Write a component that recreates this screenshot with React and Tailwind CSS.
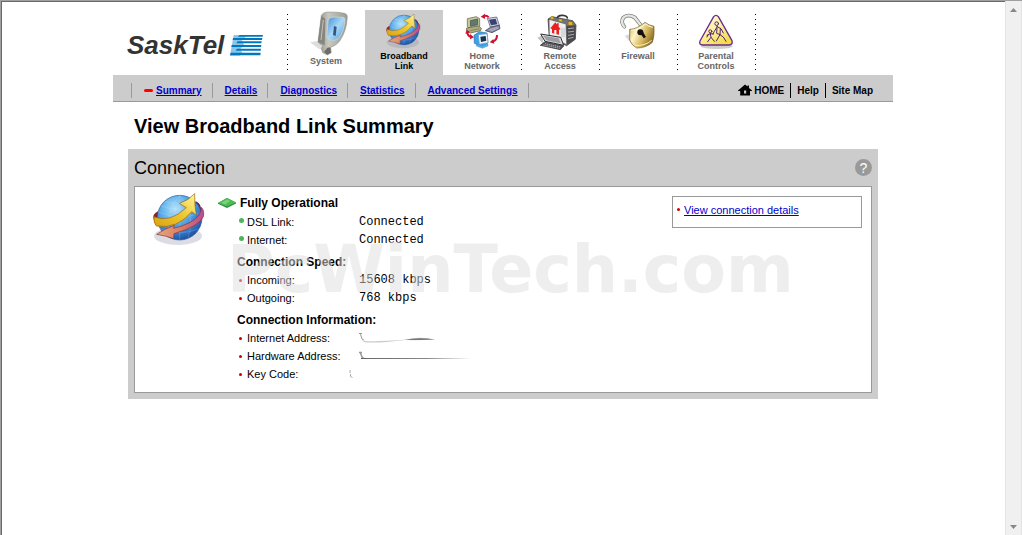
import React from "react";

/* ---------- icons ---------- */

function GlobeShapes({ id }) {
  return (
    <g>
      <defs>
        <radialGradient id={id + "s"} cx="0.4" cy="0.3" r="0.75">
          <stop offset="0" stopColor="#b5e2fb" />
          <stop offset="0.4" stopColor="#62b2ec" />
          <stop offset="0.8" stopColor="#2b6fc4" />
          <stop offset="1" stopColor="#1c4490" />
        </radialGradient>
        <linearGradient id={id + "y"} x1="0" y1="1" x2="1" y2="0">
          <stop offset="0" stopColor="#dda30e" />
          <stop offset="0.5" stopColor="#ecc62f" />
          <stop offset="1" stopColor="#fff69a" />
        </linearGradient>
        <linearGradient id={id + "r"} x1="0" y1="0" x2="1" y2="0">
          <stop offset="0" stopColor="#e8a878" />
          <stop offset="0.55" stopColor="#d87a62" />
          <stop offset="1" stopColor="#b64d94" />
        </linearGradient>
      </defs>
      <ellipse cx="144" cy="152" rx="72" ry="27" fill="#8a8aa5" opacity="0.3" />
      <path d="M70 98 Q68 86 84 78 L92 96 L74 112 Z" fill="#8c1f2c" />
      <path d="M198 48 Q216 56 214 82 L196 76 Z" fill="#6a1d55" />
      <circle cx="149" cy="97" r="67" fill={`url(#${id}s)`} stroke="#2c5798" strokeWidth="2" />
      <g fill="none" stroke="#d3effc" strokeWidth="1.5" opacity="0.4">
        <path d="M94 62 Q149 82 203 62" />
        <path d="M104 48 Q149 60 194 48" />
        <path d="M84 80 Q149 108 215 82" />
        <path d="M90 130 Q149 154 208 130" />
        <path d="M149 30 V164" />
        <path d="M149 30 Q98 82 124 158" />
        <path d="M149 30 Q200 82 174 158" />
      </g>
      <path
        d="M214 66 Q224 76 220 94 Q208 123 132 145 L131 160 Q106 151 80 147 Q104 130 133 120 L131 129 Q190 114 206 90 Q215 78 214 66 Z"
        fill={`url(#${id}r)`}
        stroke="#842d3c"
        strokeWidth="2"
      />
      <path
        d="M72 94 Q118 115 169 67 L148 54 Q176 45 194 25 Q193 58 199 89 L185 79 Q143 132 79 122 Q70 111 72 94 Z"
        fill={`url(#${id}y)`}
        stroke="#98610a"
        strokeWidth="2"
      />
    </g>
  );
}

function SystemIcon() {
  return (
    <svg viewBox="531 30 234 138" className="block h-[46px] w-[78px]" aria-hidden="true">
      <defs>
        <linearGradient id="sysScreen" x1="0" y1="0" x2="1" y2="1">
          <stop offset="0" stopColor="#3f8fd8" />
          <stop offset="0.5" stopColor="#a9d8f6" />
          <stop offset="1" stopColor="#4a9ae0" />
        </linearGradient>
        <linearGradient id="sysBody" x1="0" y1="0" x2="1" y2="0">
          <stop offset="0" stopColor="#8a8b84" />
          <stop offset="0.35" stopColor="#c8c8bf" />
          <stop offset="1" stopColor="#9b9c94" />
        </linearGradient>
      </defs>
      <path d="M600 127 L628 122 L646 150 L626 146 Z" fill="#d5d5d5" opacity="0.8" />
      <path
        d="M634 46 Q639 37 650 36 Q684 35 704 40 Q713 43 712 52 Q710 92 690 122 Q678 138 662 142 L664 158 L652 165 L638 158 L634 146 L638 136 Q628 132 624 126 Z"
        fill="url(#sysBody)"
        stroke="#8d8d85"
        strokeWidth="1.5"
      />
      <path d="M634 48 L646 56 L644 136 L624 124 Z" fill="#85867f" />
      <path d="M640 60 L633 120" stroke="#c3c3ba" strokeWidth="3" />
      <path
        d="M655 60 Q659 51 671 51 L699 52 Q706 53 705 61 Q702 94 686 115 Q675 124 660 120 Q650 116 650 108 Z"
        fill="url(#sysScreen)"
        stroke="#d9dbd5"
        strokeWidth="2"
      />
      <path d="M672 78 L680 81 L677 108 L669 105 Z" fill="#35577e" />
      <path d="M652 143 L661 142 L663 158 L652 164 L642 156 Z" fill="#6c6d68" />
    </svg>
  );
}

function BroadbandIcon() {
  return (
    <svg viewBox="15 30 234 123" className="block h-[41px] w-[78px]" aria-hidden="true">
      <g transform="translate(32.6 25.3) scale(0.667)">
        <GlobeShapes id="gsm" />
      </g>
    </svg>
  );
}

function HomeNetworkIcon() {
  return (
    <svg viewBox="249 30 234 123" className="block h-[41px] w-[78px]" aria-hidden="true">
      {/* beige desktop computer */}
      <path d="M322 56 L349 50 L359 56 L359 79 L332 86 L322 80 Z" fill="#c9c79b" stroke="#5b5a3a" strokeWidth="2" />
      <path d="M331 62 L353 57 L353 74 L332 79 Z" fill="#5c7b77" stroke="#3f4b36" strokeWidth="2" />
      <path d="M320 84 L356 78 L364 85 L362 92 L332 99 L320 91 Z" fill="#b0ae80" stroke="#55543a" strokeWidth="2" />
      <path d="M331 92 L358 86" stroke="#6d6c48" strokeWidth="2" />
      {/* laptop */}
      <path d="M382 55 L410 51 L418 76 L391 81 Z" fill="#d3d6ea" stroke="#454860" strokeWidth="2" />
      <path d="M387 59 L407 56 L412 73 L393 76 Z" fill="#38436f" />
      <path d="M391 82 L418 76 L420 86 L396 98 L376 92 Z" fill="#85889f" stroke="#33354a" strokeWidth="2" />
      <path d="M386 90 L413 81 M391 93 L416 84" stroke="#e3e4ef" strokeWidth="1.5" />
      {/* blue desktop computer */}
      <path d="M342 106 L358 95 L381 99 L384 128 L371 139 L343 130 Z" fill="#3da1e6" stroke="#1c70b8" strokeWidth="2" />
      <path d="M355 104 L381 101 L384 128 L358 133 Z" fill="#eef5fa" stroke="#5b9fd8" strokeWidth="2" />
      <path d="M361 110 L377 108 L379 122 L363 126 Z" fill="#1b3150" />
      <path d="M349 132 L366 138 L384 131 L384 138 L367 145 L349 138 Z" fill="#58aee8" stroke="#2b78b5" strokeWidth="1" />
      {/* circulating arrows */}
      <g fill="none" stroke="#d0102e" strokeWidth="6">
        <path d="M386 52 Q380 45 371 49" />
        <path d="M322 94 Q322 110 334 111" />
        <path d="M411 105 Q411 121 398 125" />
      </g>
      <g fill="#d0102e">
        <path d="M362 50 L375 41 L375 57 Z" />
        <path d="M316 102 L320 89 L331 97 Z" />
        <path d="M389 127 L400 117 L403 131 Z" />
        <path d="M330 102 L342 112 L330 118 Z" />
      </g>
    </svg>
  );
}

function RemoteAccessIcon() {
  return (
    <svg viewBox="3 30 234 123" className="block h-[41px] w-[78px]" aria-hidden="true">
      <path d="M52 113 L66 106 L72 134 Z" fill="#c6c6c6" />
      <path d="M111 56 Q113 45 128 46 Q143 47 142 56" fill="none" stroke="#37373b" strokeWidth="5" />
      <path d="M84 57 L96 50 L158 62 L168 75 L166 118 L140 137 L88 112 Z" fill="#727277" stroke="#28282b" strokeWidth="2" />
      <path d="M138 78 L166 76 L165 118 L140 135 Z" fill="#49494e" />
      <path d="M144 86 L162 84 M144 96 L162 94 M144 106 L162 103 M144 116 L160 112" stroke="#a9a9af" strokeWidth="3" />
      <path d="M87 58 L138 72 L140 134 L88 110 Z" fill="#f0f0f1" stroke="#54545a" strokeWidth="2" />
      <path d="M91 85 L106 67 L122 88 L117 89 L117 104 L96 99 L96 87 Z" fill="#ea2121" />
      <path d="M103 90 h6 v12 l-6 -1 Z" fill="#fff" />
      <path d="M111 70 h5 v9 h-5 Z" fill="#ea2121" />
      <path d="M126 82 V112 M132 84 V112" stroke="#c2c2c7" strokeWidth="3" />
      <path d="M62 102 L122 112 L131 136 L75 124 Z" fill="#d9d9dc" stroke="#303034" strokeWidth="3" />
      <path d="M70 107 L116 115 L122 130 L79 121 Z" fill="#9d9da3" />
      <path d="M74 126 L131 138 L121 149 L61 136 Z" fill="#535359" stroke="#27272a" strokeWidth="2" />
      <path d="M75 131 L123 141 M70 135 L119 145" stroke="#dedee2" strokeWidth="2" strokeDasharray="4 2" />
      <g fill="#e6bb29" stroke="#755c0c" strokeWidth="1">
        <path d="M91 51 L99 49 L102 57 L93 59 Z" />
        <path d="M116 57 L126 58 L127 66 L116 64 Z" />
        <path d="M145 65 L157 66 L158 76 L145 75 Z" />
      </g>
    </svg>
  );
}

function FirewallIcon() {
  return (
    <svg viewBox="237 30 234 123" className="block h-[41px] w-[78px]" aria-hidden="true">
      <defs>
        <linearGradient id="lockBody" x1="0" y1="0" x2="1" y2="0.5">
          <stop offset="0" stopColor="#c8a74b" />
          <stop offset="0.35" stopColor="#fff6ca" />
          <stop offset="0.7" stopColor="#d5b75c" />
          <stop offset="1" stopColor="#91712a" />
        </linearGradient>
      </defs>
      <path d="M314 107 L332 102 L348 141 L330 126 Z" fill="#cfcfcf" opacity="0.8" />
      <path d="M313 80 Q301 66 310 53 Q324 40 345 53 L364 78" fill="none" stroke="#5b5b58" strokeWidth="11" strokeLinecap="round" />
      <path d="M313 80 Q301 66 310 53 Q324 40 345 53 L364 78" fill="none" stroke="#e6e6e0" strokeWidth="8" strokeLinecap="round" />
      <path d="M316 80 Q306 67 313 56 Q325 45 342 57 L360 79" fill="none" stroke="#a2a29d" strokeWidth="2" />
      <path d="M329 88 Q350 88 375 67 Q386 76 402 79 Q404 108 397 127 Q379 144 350 144 Q334 135 329 120 Z" fill="url(#lockBody)" stroke="#755b20" strokeWidth="2" />
      <path d="M333 91 Q355 91 376 72 Q386 79 398 82" fill="none" stroke="#fff9dc" strokeWidth="3" />
      <circle cx="361" cy="97" r="9" fill="#111" />
      <path d="M360 99 L369 96 L378 111 L371 115 Z" fill="#111" />
      <path d="M343 136 Q375 139 395 121" fill="none" stroke="#fbefb7" strokeWidth="3" />
    </svg>
  );
}

function ParentalIcon() {
  return (
    <svg viewBox="471 30 234 123" className="block h-[41px] w-[78px]" aria-hidden="true">
      <defs>
        <linearGradient id="signFill" x1="0" y1="0" x2="0.6" y2="1">
          <stop offset="0" stopColor="#fffde6" />
          <stop offset="0.6" stopColor="#fbf09a" />
          <stop offset="1" stopColor="#f2dc4c" />
        </linearGradient>
      </defs>
      <ellipse cx="590" cy="139" rx="48" ry="8" fill="#cecece" />
      <path d="M581 50 Q588 42 595 50 L636 122 Q639 134 627 135 L548 135 Q536 134 540 123 Z" fill="url(#signFill)" stroke="#6b2a91" strokeWidth="4" strokeLinejoin="round" />
      <g fill="none" stroke="#542077" strokeWidth="3" strokeLinecap="round" strokeLinejoin="round">
        <circle cx="590" cy="71" r="5.5" />
        <path d="M590 79 L603 86 L610 99 M592 80 L583 94 L579 102 M601 86 L600 104 L589 123 M600 104 L610 111 L618 124 M591 84 L590 100 L600 104" />
        <circle cx="571" cy="94" r="4.5" />
        <path d="M571 101 L561 106 M571 101 L580 102 M571 101 L573 112 L563 125 M573 112 L583 124 M565 103 L561 111" />
      </g>
    </svg>
  );
}

function LogoStripes() {
  return (
    <svg viewBox="361 99 99 66" className="block h-[22px] w-[33px]" aria-hidden="true">
      <path fill="#8dc5e8" d="M372 102 H414 L396 120 L404 132 L392 144 L398 156 L390 164 H361 Z" />
      <g fill="#0078c0">
        <path d="M390 102 H460 L459 107 H384 Z" />
        <path d="M370 111 H458 L457 117 H369 Z" />
        <path d="M384 121 H456 L455 127 H380 Z" />
        <path d="M366 132 H455 L454 138 H365 Z" />
        <path d="M382 143 H454 L453 149 H378 Z" />
        <path d="M363 155 H453 L452 163 H361 Z" />
      </g>
    </svg>
  );
}

function HouseIcon() {
  return (
    <svg viewBox="0 0 14 12" className="block h-3 w-3.5" aria-hidden="true">
      <path fillRule="evenodd" d="M7 0.5 L9.5 2.6 V1.4 H11 V4 L14 6.6 V7 H12 V11.4 H2.2 V7 H0 V6.6 Z M6 6.5 V9.6 H8.2 V6.5 Z" fill="#000" />
    </svg>
  );
}

/* ---------- building blocks ---------- */

const sections = [
  { label: ["System"], Icon: SystemIcon, dotted: true },
  { label: ["Broadband", "Link"], Icon: BroadbandIcon, active: true },
  { label: ["Home", "Network"], Icon: HomeNetworkIcon },
  { label: ["Remote", "Access"], Icon: RemoteAccessIcon, dotted: true },
  { label: ["Firewall"], Icon: FirewallIcon, dotted: true },
  { label: ["Parental", "Controls"], Icon: ParentalIcon, dotted: true },
];

const pages = ["Summary", "Details", "Diagnostics", "Statistics", "Advanced Settings"];

function Dots({ side }) {
  return (
    <span
      className={
        "absolute top-1 bottom-1 w-px bg-[repeating-linear-gradient(to_bottom,#000_0_1px,transparent_1px_5px)] " +
        (side === "right" ? "-right-px" : "left-0")
      }
    />
  );
}

function Bullet({ green }) {
  return green ? (
    <span className="mb-1 size-[5px] rounded-full bg-[#4db457]" />
  ) : (
    <span className="size-[3px] rounded-full bg-[#cc0000]" />
  );
}

function Row({ label, green, children }) {
  return (
    <div className="flex h-[18px] items-center">
      <dt className="flex w-[122px] shrink-0 items-center">
        <span className="flex w-[10px] items-center pl-0.5">
          <Bullet green={green} />
        </span>
        {label}
      </dt>
      <dd className="font-['Liberation_Mono',monospace] text-xs">{children}</dd>
    </div>
  );
}

function GroupTitle({ children }) {
  return <h3 className="mt-1 flex h-[18px] items-center text-xs font-bold">{children}</h3>;
}

function Scrollbar() {
  return (
    <div className="flex w-[17px] shrink-0 flex-col justify-between border-x border-[#e3e3e3] bg-[#f0f0f0]">
      <button type="button" aria-label="Scroll up" className="flex h-[17px] items-center justify-center">
        <svg viewBox="0 0 7 4" className="h-1 w-[7px]">
          <path d="M3.5 0 L7 4 H0 Z" fill="#888" />
        </svg>
      </button>
      <button type="button" aria-label="Scroll down" className="flex h-[17px] items-center justify-center">
        <svg viewBox="0 0 7 4" className="h-1 w-[7px]">
          <path d="M0 0 H7 L3.5 4 Z" fill="#888" />
        </svg>
      </button>
    </div>
  );
}

/* ---------- page ---------- */

export default function App() {
  return (
    <div className="flex min-h-screen border-t border-l border-[#a0a0a0] bg-white font-['Liberation_Sans',Arial,sans-serif] text-black">
      <div className="min-w-0 flex-1 border-t border-l border-[#696969] pr-px">
        <div className="mx-auto max-w-[780px] pt-2">
          <header className="flex">
            <a href="#home" aria-label="SaskTel" className="flex min-w-0 flex-1 items-center gap-1.5 pt-1 pl-3.5">
              <span className="text-[26px] leading-8 font-bold text-[#333] italic">SaskTel</span>
              <LogoStripes />
            </a>
            <nav aria-label="Sections" className="flex pr-[138px]">
              {sections.map(({ label, Icon, active, dotted }, i) => (
                <a
                  key={label[0]}
                  href={"#" + label[0].toLowerCase()}
                  className={
                    "relative h-[65px] w-[78px] text-center text-[9px] leading-[10px] font-bold " +
                    (active ? "bg-[#cccccc] text-black" : "text-[#666666]")
                  }
                >
                  {dotted && <Dots />}
                  <Icon />
                  {label.map((word) => (
                    <span key={word} className="block">
                      {word}
                    </span>
                  ))}
                  {i === sections.length - 1 && <Dots side="right" />}
                </a>
              ))}
            </nav>
          </header>

          <div className="flex h-[27px] items-center justify-between border-b border-[#999999] bg-[#cccccc] pt-1 pr-5 pl-[18px] text-[10px] font-bold">
            <ul className="flex h-[15px] items-center">
              {pages.map((name, i) => (
                <li key={name} className="flex h-[15px] items-center gap-[3px] border-l border-[#999999] pr-2.5 pl-3">
                  {i === 0 && <span className="h-[3px] w-[9px] rounded-full bg-[#ff0000]" />}
                  <a href={"#" + name.toLowerCase().replace(" ", "-")} className="text-[#0000cc] underline">
                    {name}
                  </a>
                </li>
              ))}
              <li className="h-[15px] border-l border-[#999999]" />
            </ul>
            <div className="flex h-[15px] items-center">
              <a href="#top" className="flex items-center gap-0.5 pr-1.5">
                <HouseIcon />
                HOME
              </a>
              <a href="#help" className="flex h-[15px] items-center border-l border-black px-1.5">
                Help
              </a>
              <a href="#sitemap" className="flex h-[15px] items-center border-l border-black pl-1.5">
                Site Map
              </a>
            </div>
          </div>

          <main className="px-[15px]">
            <h1 className="flex h-[47px] items-center pl-1.5 text-xl font-bold">View Broadband Link Summary</h1>

            <section className="bg-[#cccccc] px-1.5 pb-1.5">
              <div className="flex h-[37px] items-center justify-between">
                <h2 className="text-lg">Connection</h2>
                <button
                  type="button"
                  aria-label="Help"
                  className="flex size-[17px] items-center justify-center rounded-full bg-[#999999] text-sm leading-none text-white"
                >
                  ?
                </button>
              </div>

              <div className="relative flex border border-[#999999] bg-white pt-1.5 pr-[9px] pb-[9px] text-[11px]">
                <div className="w-[83px] shrink-0 pl-[15px]">
                  <svg viewBox="60 23 168 168" className="block size-14" aria-hidden="true">
                    <GlobeShapes id="glg" />
                  </svg>
                </div>

                <div className="min-w-0 flex-1">
                  <h3 className="flex h-5 items-center gap-1 text-xs font-bold">
                    <svg viewBox="0 0 18 10" className="h-2.5 w-[18px]" aria-hidden="true">
                      <path d="M0 5 L9 0 L18 4.5 V5.5 L9 10 L0 5.8 Z" fill="#2e8b3a" />
                      <path d="M0 5 L9 0 L18 4.5 L9 8.5 Z" fill="#4fbb56" />
                      <path d="M3 4.8 L9 1.5 L12 3 L7 6.5 Z" fill="#78d47b" />
                    </svg>
                    Fully Operational
                  </h3>
                  <dl className="pl-[19px]">
                    <Row label="DSL Link:" green>
                      Connected
                    </Row>
                    <Row label="Internet:" green>
                      Connected
                    </Row>
                  </dl>
                  <div className="pl-[19px]">
                    <GroupTitle>Connection Speed:</GroupTitle>
                    <dl>
                      <Row label="Incoming:">15608 kbps</Row>
                      <Row label="Outgoing:">768 kbps</Row>
                    </dl>
                    <GroupTitle>Connection Information:</GroupTitle>
                    <dl>
                      <Row label="Internet Address:">
                        <svg viewBox="0 0 80 12" className="block h-3 w-20" aria-hidden="true">
                          <path d="M0 1.5 H3 M1.5 2 L3 7 L5 8" fill="none" stroke="#999" strokeWidth="1" />
                          <path d="M3 8 Q6 10 20 9 Q40 8.5 50 7 Q62 4.5 76 7.5 Q60 8.5 46 8 Q24 11 8 10.5 Q4 10 3 8 Z" fill="#ccc" />
                          <path d="M46 8 Q58 5 76 7.5 Q62 8 46 8 Z" fill="#777" />
                        </svg>
                      </Row>
                      <Row label="Hardware Address:">
                        <svg viewBox="0 0 112 12" className="block h-3 w-28" aria-hidden="true">
                          <defs>
                            <linearGradient id="fade" x1="0" x2="1">
                              <stop offset="0" stopColor="#666" />
                              <stop offset="0.6" stopColor="#888" />
                              <stop offset="1" stopColor="#fff" />
                            </linearGradient>
                          </defs>
                          <path d="M0 2.5 H3 M1.5 3 L3 7 L5 8.5" fill="none" stroke="#999" strokeWidth="1.5" />
                          <rect x="2" y="8" width="110" height="1" fill="url(#fade)" />
                        </svg>
                      </Row>
                      <Row label="Key Code:">
                        <svg viewBox="0 0 5 8" className="-ml-2.5 block h-2 w-[5px]" aria-hidden="true">
                          <path d="M1 0 V3 M1.5 4 V6.5 L3.5 7.5" fill="none" stroke="#aaa" strokeWidth="1" />
                        </svg>
                      </Row>
                    </dl>
                  </div>
                </div>

                <div className="mt-[3px] flex h-8 w-[190px] shrink-0 items-start gap-1 self-start border border-[#999999] px-1 pt-[5px]">
                  <span className="mt-1.5 size-[3px] rounded-full bg-[#cc0000]" />
                  <a href="#connection-details" className="leading-4 text-[#0000cc] underline">
                    View connection details
                  </a>
                </div>

                <div
                  aria-hidden="true"
                  className="pointer-events-none absolute top-[50px] left-[92px] font-['DejaVu_Sans',sans-serif] text-[65px] leading-none font-bold whitespace-nowrap text-[#dddddd]/50"
                >
                  PcWinTech.com
                </div>
              </div>
            </section>
          </main>
        </div>
      </div>
      <Scrollbar />
    </div>
  );
}
